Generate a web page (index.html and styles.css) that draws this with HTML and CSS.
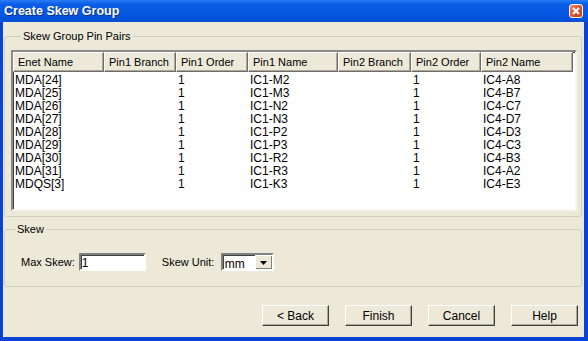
FILE: index.html
```html
<!DOCTYPE html>
<html lang="en">
<head>
    <meta charset="UTF-8">
    <title>Create Skew Group</title>
    <link rel="stylesheet" href="styles.css">
</head>
<body>

    <div class="window">
        <div class="titlebar">
            <span class="title">Create Skew Group</span>
            <span class="close-btn">
                <svg width="8" height="8" viewBox="0 0 8 8">
                    <path d="M1 1 L7 7 M7 1 L1 7" stroke="white" stroke-width="2"/>
                </svg>
            </span>
        </div>

        <div class="frame">
            <fieldset class="group pairs">
                <legend>Skew Group Pin Pairs</legend>
                <div class="list">
                    <div class="row head">
                        <div>Enet Name</div>
                        <div>Pin1 Branch</div>
                        <div>Pin1 Order</div>
                        <div>Pin1 Name</div>
                        <div>Pin2 Branch</div>
                        <div>Pin2 Order</div>
                        <div>Pin2 Name</div>
                    </div>
                    <div id="rows"></div>
                </div>
            </fieldset>

            <fieldset class="group skew">
                <legend>Skew</legend>
                <div class="skew-line">
                    <label for="maxSkew">Max Skew:</label>
                    <input type="text" id="maxSkew" class="field" value="1">
                    <label class="unit-label">Skew Unit:</label>
                    <div class="combo">
                        <span class="combo-value">mm</span>
                        <span class="combo-btn">
                            <svg width="7" height="4" viewBox="0 0 7 4"><path d="M0 0 H7 L3.5 4 Z" fill="black"/></svg>
                        </span>
                    </div>
                </div>
            </fieldset>

            <div class="buttons">
                <button>&lt; Back</button>
                <button>Finish</button>
                <button>Cancel</button>
                <button>Help</button>
            </div>
        </div>
    </div>

    <script>
        const pairs = [
            ["MDA[24]", "M2", "A8"],
            ["MDA[25]", "M3", "B7"],
            ["MDA[26]", "N2", "C7"],
            ["MDA[27]", "N3", "D7"],
            ["MDA[28]", "P2", "D3"],
            ["MDA[29]", "P3", "C3"],
            ["MDA[30]", "R2", "B3"],
            ["MDA[31]", "R3", "A2"],
            ["MDQS[3]", "K3", "E3"]
        ];

        const rows = document.getElementById("rows");
        pairs.forEach(p => {
            rows.innerHTML += `
                <div class="row data">
                    <div>${p[0]}</div>
                    <div></div>
                    <div>1</div>
                    <div>IC1-${p[1]}</div>
                    <div></div>
                    <div>1</div>
                    <div>IC4-${p[2]}</div>
                </div>
            `;
        });
    </script>

</body>
</html>
```

FILE: styles.css
```css
body {
    margin: 0;
    padding: 0;
    font-family: "Liberation Sans", Arial, sans-serif;
    font-size: 11px;
    color: #000;
}

.window {
    width: 588px;
    height: 341px;
    display: flex;
    flex-direction: column;
    background-color: #0842d6;
}

.titlebar {
    height: 22px;
    display: flex;
    align-items: center;
    justify-content: space-between;
    padding: 0 5px 0 4px;
    background: linear-gradient(to bottom, #2a7cf4 0%, #0a5fe6 18%, #0557e2 60%, #0450d6 100%);
}

.title {
    color: white;
    font-weight: bold;
    font-size: 12.5px;
    text-shadow: 1px 1px 0 #0a2f8c;
}

.close-btn {
    width: 14px;
    height: 14px;
    box-sizing: border-box;
    border: 1px solid white;
    border-radius: 3px;
    background: linear-gradient(135deg, #f08a6a 0%, #e0512f 50%, #c63a1c 100%);
    display: flex;
    align-items: center;
    justify-content: center;
}

.frame {
    flex: 1;
    margin: 0 4px 4px 3px;
    background-color: #ece9d8;
    display: flex;
    flex-direction: column;
    padding: 0 2px 0 1px;
}

.group {
    margin: 0;
    padding: 0;
    border: 1px solid #d0d0bf;
    border-radius: 3px;
}

.group legend {
    margin-left: 10px;
    padding: 0 2px;
    line-height: 13px;
}

.pairs {
    margin-top: 8px;
    padding: 7px 4px 5px 6px;
}

.list {
    height: 161px;
    box-sizing: border-box;
    background-color: white;
    border: 2px solid;
    border-color: #8a8a86 #f6f5ef #f6f5ef #8a8a86;
    box-shadow: inset 1px 1px 0 #404040;
    overflow: hidden;
}

.row {
    display: grid;
    grid-template-columns: 91px 72px 72px 90px 73px 70px 92px;
}

.head {
    height: 20px;
    margin-bottom: 2px;
}

.head div {
    background-color: #ece9d8;
    border-top: 1px solid white;
    border-left: 1px solid white;
    border-right: 1px solid #6d6d6d;
    border-bottom: 1px solid #6d6d6d;
    box-shadow: inset -1px -1px 0 #aca899;
    padding-left: 4px;
    line-height: 18px;
    white-space: nowrap;
    overflow: hidden;
}

.data div {
    font-size: 12px;
    line-height: 13px;
    height: 13px;
    padding-left: 2px;
    white-space: nowrap;
}

.skew {
    margin-top: 6px;
    height: 64px;
    box-sizing: border-box;
}

.skew-line {
    display: flex;
    align-items: center;
    padding: 17px 0 0 16px;
}

.skew-line label {
    margin-right: 4px;
}

.field {
    width: 67px;
    height: 18px;
    box-sizing: border-box;
    font-family: "Liberation Sans", Arial, sans-serif;
    font-size: 12px;
    padding: 1px 1px 0;
    border: 2px solid;
    border-color: #808080 #ffffff #ffffff #808080;
    box-shadow: inset 1px 1px 0 #404040;
    outline: none;
}

.unit-label {
    margin-left: 16px;
    width: 55px;
}

.combo {
    width: 53px;
    height: 18px;
    box-sizing: border-box;
    display: flex;
    background-color: white;
    border: 2px solid;
    border-color: #808080 #ffffff #ffffff #808080;
    box-shadow: inset 1px 1px 0 #404040;
}

.combo-value {
    flex: 1;
    font-size: 12px;
    line-height: 14px;
    padding: 2px 0 0 2px;
}

.combo-btn {
    width: 16px;
    background-color: #ece9d8;
    border-left: 1px solid white;
    border-top: 1px solid white;
    box-shadow: inset -1px -1px 0 #808080;
    display: flex;
    align-items: center;
    justify-content: center;
}

.buttons {
    display: flex;
    justify-content: flex-end;
    gap: 16px;
    margin-top: 18px;
    padding-right: 4px;
}

.buttons button {
    width: 67px;
    height: 21px;
    font-family: "Liberation Sans", Arial, sans-serif;
    font-size: 12px;
    background-color: #ece9d8;
    border: 1px solid;
    border-color: #ffffff #404040 #404040 #ffffff;
    box-shadow: inset -1px -1px 0 #aca899;
    padding: 0;
}
```
